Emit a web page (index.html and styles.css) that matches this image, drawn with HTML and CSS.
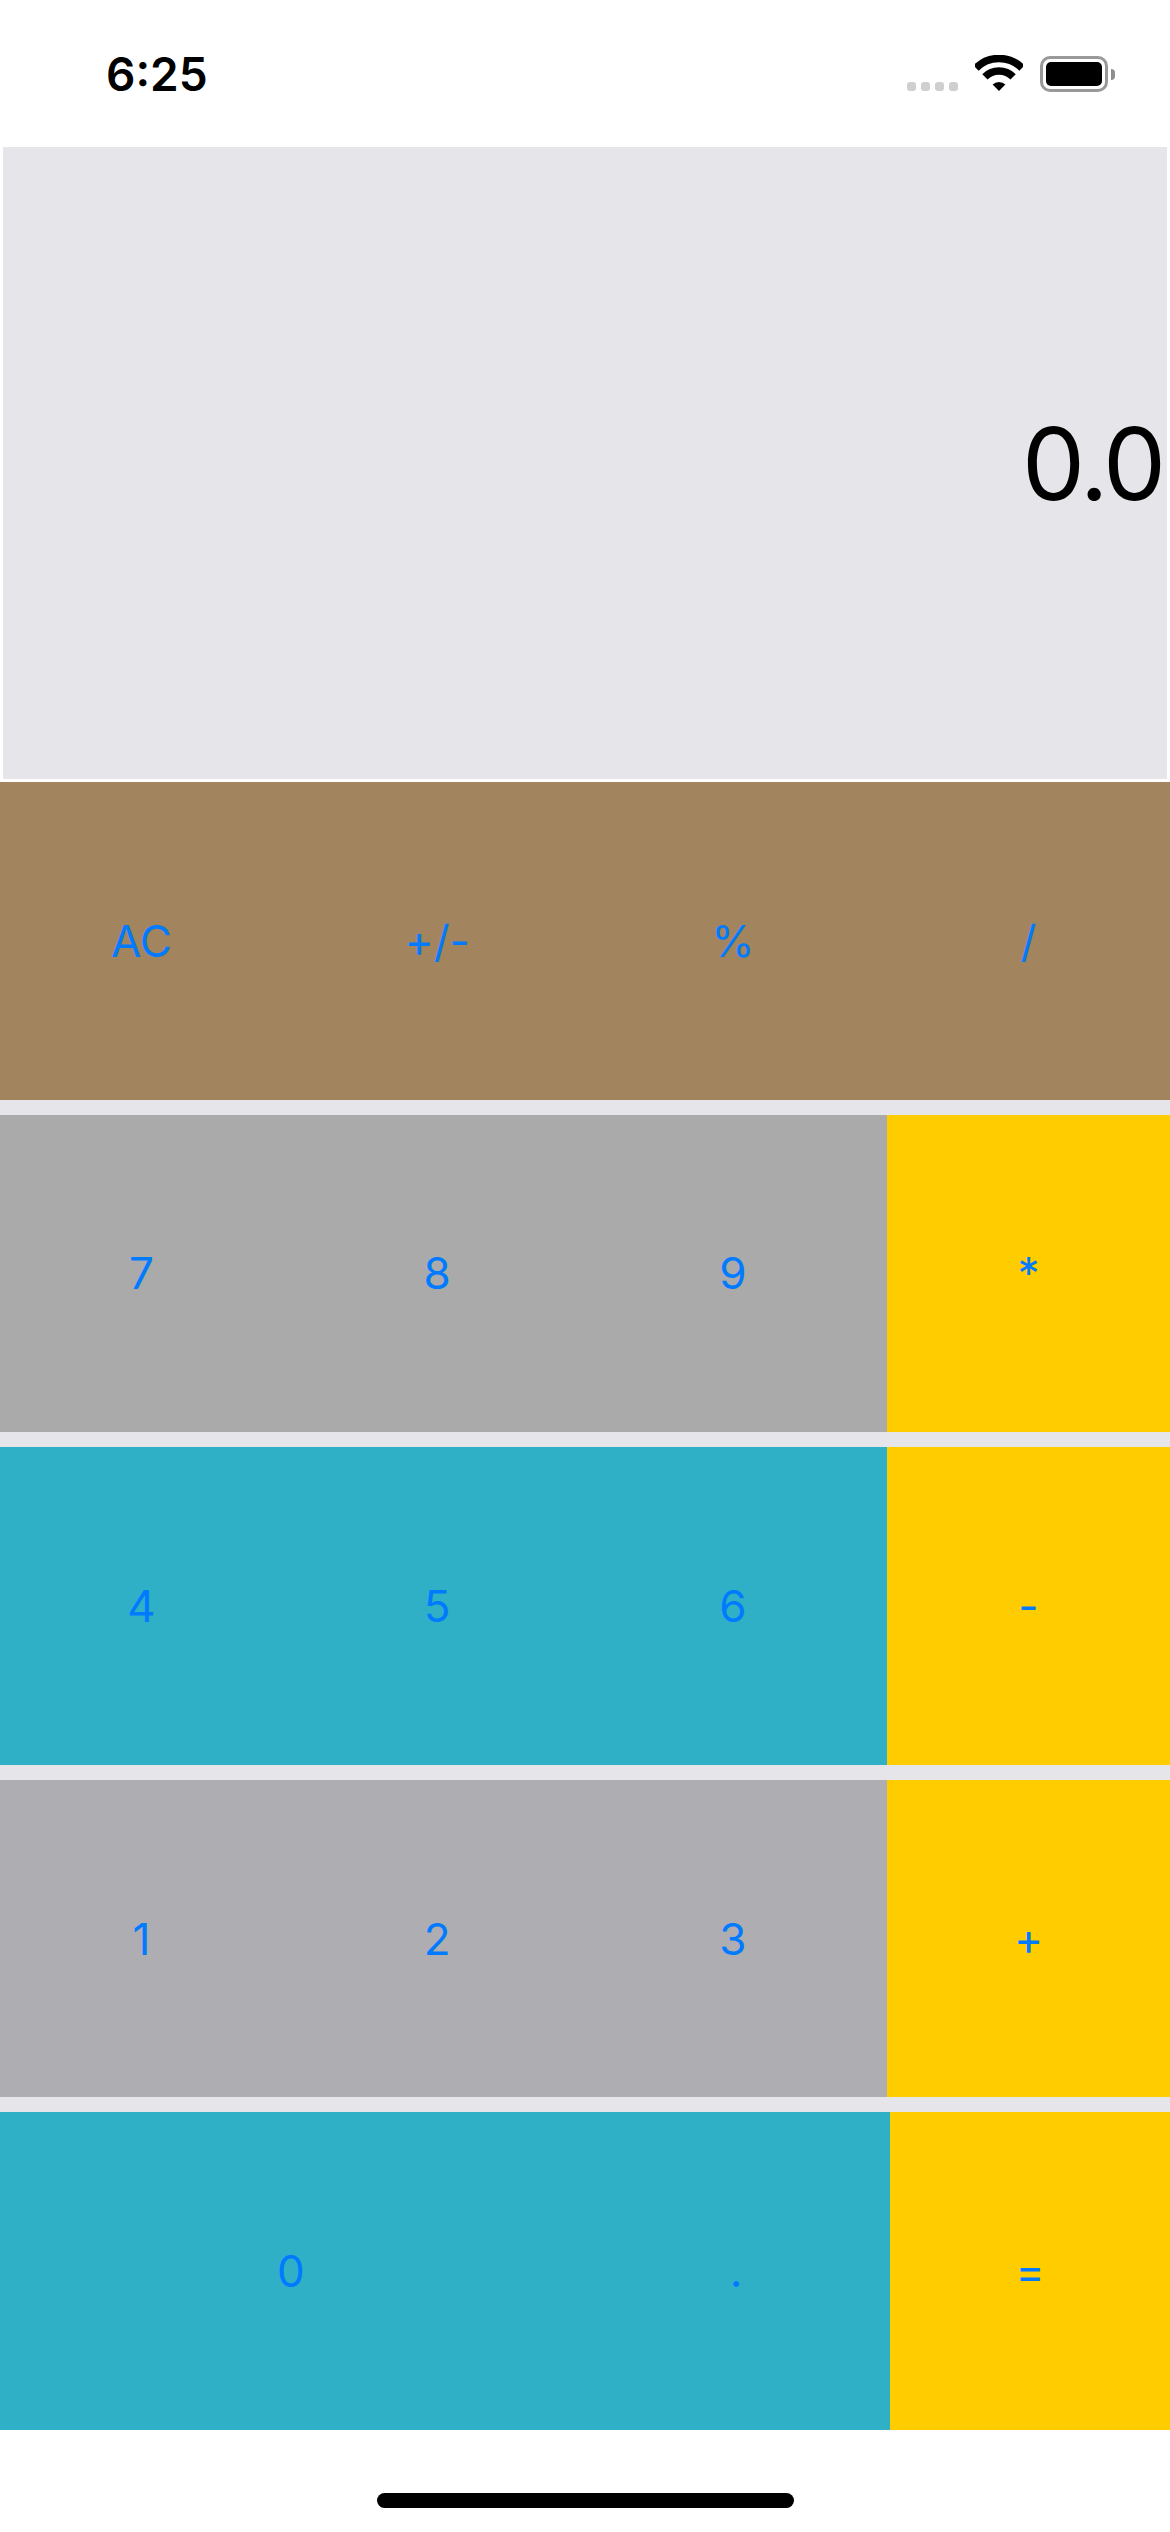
FILE: index.html
```html
<!DOCTYPE html>
<html lang="en">
<head>
    <meta charset="UTF-8">
    <meta name="viewport" content="width=device-width, initial-scale=1.0">
    <title>Calculator</title>
    <link rel="stylesheet" href="styles.css">
</head>
<body>
    <div class="status-bar">
        <span class="time">6:25</span>
        <div class="status-icons">
            <div class="signal">
                <span class="dot"></span>
                <span class="dot"></span>
                <span class="dot"></span>
                <span class="dot"></span>
            </div>
            <svg class="wifi" viewBox="0 0 48 36" width="48" height="36">
                <path class="wifi-arc" d="M1 13A32.5 32.5 0 0 1 47 13"/>
                <path class="wifi-arc" d="M9.9 21.9A20 20 0 0 1 38.1 21.9"/>
                <path class="wifi-fill" d="M24 36L17.6 29.6A9 9 0 0 1 30.4 29.6Z"/>
            </svg>
            <div class="battery">
                <div class="battery-body"><div class="battery-level"></div></div>
                <div class="battery-nub"></div>
            </div>
        </div>
    </div>

    <div class="display">
        <span class="display-value">0.0</span>
    </div>

    <div class="keypad">
        <div class="row row-brown">
            <button class="key">AC</button>
            <button class="key">+/-</button>
            <button class="key">%</button>
            <button class="key">/</button>
        </div>
        <div class="row row-gray">
            <button class="key">7</button>
            <button class="key">8</button>
            <button class="key">9</button>
            <button class="key key-op">*</button>
        </div>
        <div class="row row-teal">
            <button class="key">4</button>
            <button class="key">5</button>
            <button class="key">6</button>
            <button class="key key-op">-</button>
        </div>
        <div class="row row-gray2">
            <button class="key">1</button>
            <button class="key">2</button>
            <button class="key">3</button>
            <button class="key key-op">+</button>
        </div>
        <div class="row row-teal row-last">
            <button class="key">0</button>
            <button class="key">.</button>
            <button class="key key-op">=</button>
        </div>
    </div>

    <div class="home-bar">
        <div class="home-indicator"></div>
    </div>
</body>
</html>
```

FILE: styles.css
```css
* {
    box-sizing: border-box;
}

html, body {
    margin: 0;
    padding: 0;
}

body {
    width: 1170px;
    height: 2532px;
    overflow: hidden;
    background: #fff;
    font-family: Inter, "Liberation Sans", sans-serif;
    display: flex;
    flex-direction: column;
}

.status-bar {
    height: 147px;
    display: flex;
    justify-content: space-between;
    align-items: flex-start;
    padding: 0 55px 0 106px;
}

.time {
    margin-top: 46px;
    font-size: 46px;
    line-height: 56px;
    font-weight: 580;
    color: #000;
}

.status-icons {
    display: flex;
    align-items: flex-start;
    margin-top: 55px;
}

.signal {
    display: flex;
    gap: 5px;
    margin-top: 27px;
    margin-right: 17px;
}

.dot {
    width: 9px;
    height: 9px;
    border-radius: 3px;
    background: #cfcfcf;
}

.wifi {
    display: block;
    margin-right: 17px;
}

.wifi-arc {
    fill: none;
    stroke: #000;
    stroke-width: 7.5;
}

.wifi-fill {
    fill: #000;
}

.battery {
    display: flex;
    align-items: center;
    margin-top: 1px;
}

.battery-body {
    width: 68px;
    height: 36px;
    padding: 3px;
    border: 3px solid #999;
    border-radius: 10px;
}

.battery-level {
    width: 100%;
    height: 100%;
    background: #000;
    border-radius: 5px;
}

.battery-nub {
    width: 4px;
    height: 11px;
    margin-left: 3px;
    background: #8e8e8e;
    border-radius: 0 5px 5px 0;
}

.display {
    height: 632px;
    margin: 0 3px 3px;
    padding-right: 4px;
    background: #e5e5ea;
    display: flex;
    justify-content: flex-end;
    align-items: center;
}

.display-value {
    font-size: 100px;
    font-weight: 385;
    letter-spacing: -3px;
    color: #000;
}

.keypad {
    height: 1648px;
    display: grid;
    grid-template-rows: repeat(5, 1fr);
    row-gap: 15px;
    background: #e5e5ea;
}

.row {
    display: grid;
    grid-template-columns: repeat(4, 283px);
    column-gap: 12.67px;
}

.row-last {
    grid-template-columns: 582px 282px 280px;
    column-gap: 13px;
}

.row-brown {
    background: #a2845e;
}

.row-gray {
    background: #aaaaaa;
}

.row-teal {
    background: #30b0c7;
}

.row-gray2 {
    background: #aeaeb2;
}

.key {
    border: none;
    padding: 0;
    background: transparent;
    color: #007aff;
    font-family: inherit;
    font-size: 44px;
}

.key-op {
    background: #ffcc00;
}

.home-bar {
    flex: 1;
    display: flex;
    justify-content: center;
    padding-top: 63px;
}

.home-indicator {
    width: 417px;
    height: 15px;
    border-radius: 8px;
    background: #000;
}
```
